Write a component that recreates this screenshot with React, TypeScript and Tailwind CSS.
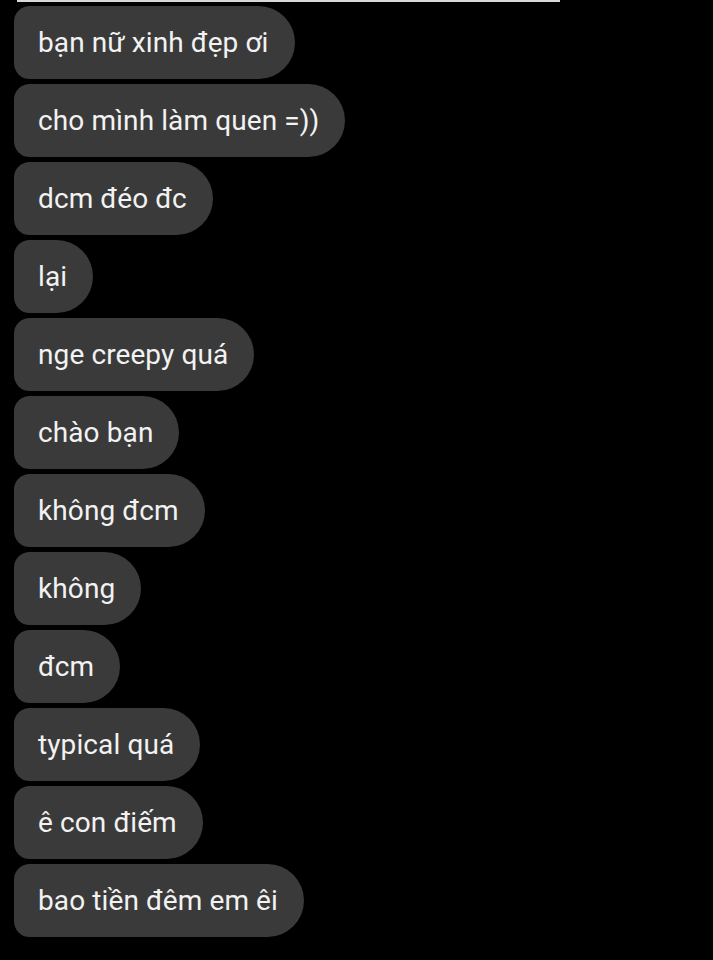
const messages = [
  "bạn nữ xinh đẹp ơi",
  "cho mình làm quen =))",
  "dcm đéo đc",
  "lại",
  "nge creepy quá",
  "chào bạn",
  "không đcm",
  "không",
  "đcm",
  "typical quá",
  "ê con điếm",
  "bao tiền đêm em êi",
];

export default function App() {
  return (
    <div className="w-[713px] h-[960px] bg-black overflow-hidden font-['Roboto',sans-serif]">
      <div className="ml-[17px] w-[543px] h-[2px] bg-[#d8d8d8]" />
      <div className="flex flex-col items-start gap-[5px] pt-[4px] pl-[14px]">
        {messages.map((m) => (
          <div
            key={m}
            className="h-[73px] flex items-center pl-[24px] pr-[26px] bg-[#3a3a3a] rounded-l-[16px] rounded-r-[37px] text-[28px] tracking-[0.1px] text-[#f2f2f2] whitespace-nowrap"
          >
            {m}
          </div>
        ))}
      </div>
    </div>
  );
}
